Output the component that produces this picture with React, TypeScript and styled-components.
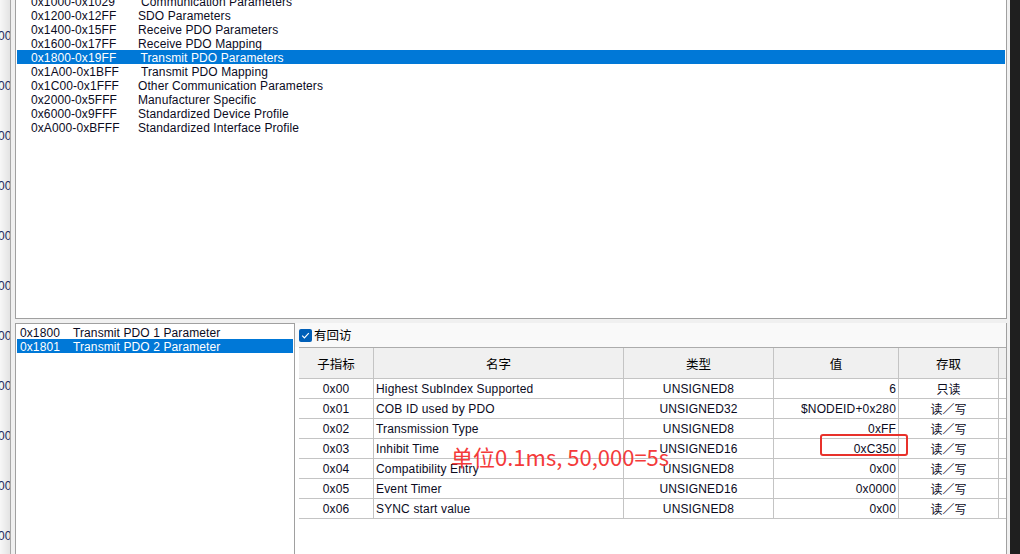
import React from "react";
import styled, { createGlobalStyle } from "styled-components";

const UI_FONT = `"Liberation Sans", Arial, "Noto Sans CJK SC", sans-serif`;
const CJK_FONT = `"Noto Sans CJK SC", "Liberation Sans", sans-serif`;

const GlobalStyle = createGlobalStyle`
  html, body { margin: 0; padding: 0; background: #f0f0f0; overflow: hidden; }
  #root { width: 1020px; height: 554px; }
`;

const Screen = styled.div`
  position: relative;
  width: 1020px;
  height: 554px;
  display: flex;
  background: #f0f0f0;
  overflow: hidden;
  font-family: ${UI_FONT};
  font-size: 12px;
  letter-spacing: 0.1px;
  color: #0b0b1e;
`;

const RulerStrip = styled.div`
  width: 10px;
  flex: none;
  border-right: 1px solid #a8a8a8;
  background: linear-gradient(to right, #f7f7f7, #e3e3e3);
  overflow: hidden;
  padding-top: 29px;
  display: flex;
  flex-direction: column;
`;

const RulerLabel = styled.div`
  height: 50px;
  flex: none;
  line-height: 14px;
  margin-left: -2px;
  color: #1c2a5e;
  white-space: nowrap;
`;

const Gutter = styled.div`
  width: 4px;
  flex: none;
`;

const MainColumn = styled.div`
  width: 992px;
  flex: none;
  display: flex;
  flex-direction: column;
`;

const TopPanel = styled.div`
  height: 319px;
  flex: none;
  box-sizing: border-box;
  border: 1px solid #a0a0a0;
  border-top: none;
  background: #fff;
  overflow: hidden;
`;

const IndexList = styled.div`
  margin-top: -6px;
  padding: 0 1px;
  display: flex;
  flex-direction: column;
`;

const IndexRow = styled.div<{ $selected?: boolean }>`
  height: 14px;
  line-height: 16px;
  display: flex;
  padding-left: 14px;
  white-space: nowrap;
  background: ${(p) => (p.$selected ? "#0078d7" : "transparent")};
  color: ${(p) => (p.$selected ? "#fff" : "#0b0b1e")};
`;

const RangeText = styled.span<{ $shift: number }>`
  width: ${(p) => 107 + p.$shift}px;
  flex: none;
`;

const Splitter = styled.div`
  height: 4px;
  flex: none;
`;

const BottomRow = styled.div`
  flex: 1;
  display: flex;
  min-height: 0;
`;

const SubList = styled.div`
  width: 280px;
  flex: none;
  box-sizing: border-box;
  border: 1px solid #a0a0a0;
  border-bottom: none;
  background: #fff;
  padding: 1px;
  display: flex;
  flex-direction: column;
`;

const SubRow = styled.div<{ $selected?: boolean }>`
  height: 14px;
  line-height: 16px;
  display: flex;
  padding-left: 3px;
  white-space: nowrap;
  background: ${(p) => (p.$selected ? "#0078d7" : "transparent")};
  color: ${(p) => (p.$selected ? "#fff" : "#0b0b1e")};
`;

const SubIndex = styled.span`
  width: 53px;
  flex: none;
`;

const RightPane = styled.div`
  flex: 1;
  display: flex;
  flex-direction: column;
  border-right: 1px solid #a0a0a0;
  background: #f9f9f9;
  min-width: 0;
`;

const OptionBar = styled.div`
  height: 24px;
  flex: none;
  display: flex;
  align-items: center;
  padding-left: 4px;
  gap: 2px;
`;

const CheckBox = styled.span`
  width: 13px;
  height: 13px;
  border-radius: 2px;
  background: #005fb8;
  display: inline-flex;
  align-items: center;
  justify-content: center;
`;

const OptionLabel = styled.span`
  font-family: ${CJK_FONT};
  font-size: 12.5px;
  letter-spacing: 0;
  color: #000;
  line-height: 16px;
`;

const TableArea = styled.div`
  flex: 1;
  background: #fff;
  padding-left: 4px;
`;

const Grid = styled.div`
  display: grid;
  grid-template-columns: 75px 250px 150px 125px 100px 1fr;
  border-top: 1px solid #acacac;
`;

const HeaderCell = styled.div<{ $last?: boolean }>`
  height: 31px;
  box-sizing: border-box;
  background: #f0f0f0;
  border-bottom: 1px solid #c4c4c4;
  border-right: ${(p) => (p.$last ? "none" : "1px solid #c4c4c4")};
  display: flex;
  align-items: center;
  justify-content: center;
  font-family: ${CJK_FONT};
  font-size: 12.5px;
  letter-spacing: 0;
  color: #000;
`;

const Cell = styled.div<{ $align?: "left" | "center" | "right"; $cjk?: boolean; $last?: boolean }>`
  height: 20px;
  box-sizing: border-box;
  border-bottom: 1px solid #c4c4c4;
  border-right: ${(p) => (p.$last ? "none" : "1px solid #c4c4c4")};
  display: flex;
  align-items: center;
  justify-content: ${(p) =>
    p.$align === "left" ? "flex-start" : p.$align === "right" ? "flex-end" : "center"};
  padding: 0 2px;
  white-space: nowrap;
  overflow: hidden;
  font-family: ${(p) => (p.$cjk ? CJK_FONT : UI_FONT)};
  font-size: 12px;
  letter-spacing: ${(p) => (p.$cjk ? "0" : "0.15px")};
  color: #0b0b1e;
`;

const EdgeLight = styled.div`
  width: 3px;
  flex: none;
  background: #f0f0f0;
`;

const EdgeDark = styled.div`
  width: 10px;
  flex: none;
  background: #1f1f1f;
`;

const Annotation = styled.div`
  position: absolute;
  left: 451px;
  top: 445px;
  font-family: ${CJK_FONT};
  font-size: 22px;
  line-height: 22px;
  letter-spacing: 0;
  color: #f43a3a;
  white-space: nowrap;
`;

const MarkBox = styled.div`
  position: absolute;
  left: 820px;
  top: 434px;
  width: 88px;
  height: 22px;
  box-sizing: border-box;
  border: 2px solid #e8312b;
  border-radius: 3px;
`;

const indexRanges: { range: string; name: string; shift: number; selected?: boolean }[] = [
  { range: "0x1000-0x1029", name: "Communication Parameters", shift: 3 },
  { range: "0x1200-0x12FF", name: "SDO Parameters", shift: 0 },
  { range: "0x1400-0x15FF", name: "Receive PDO Parameters", shift: 0 },
  { range: "0x1600-0x17FF", name: "Receive PDO Mapping", shift: 0 },
  { range: "0x1800-0x19FF", name: "Transmit PDO Parameters", shift: 2.5, selected: true },
  { range: "0x1A00-0x1BFF", name: "Transmit PDO Mapping", shift: 3 },
  { range: "0x1C00-0x1FFF", name: "Other Communication Parameters", shift: 0 },
  { range: "0x2000-0x5FFF", name: "Manufacturer Specific", shift: 0 },
  { range: "0x6000-0x9FFF", name: "Standardized Device Profile", shift: 0 },
  { range: "0xA000-0xBFFF", name: "Standardized Interface Profile", shift: 0 },
];

const subObjects = [
  { index: "0x1800", name: "Transmit PDO 1 Parameter" },
  { index: "0x1801", name: "Transmit PDO 2 Parameter", selected: true },
];

const headers = ["子指标", "名字", "类型", "值", "存取"];

const entries = [
  ["0x00", "Highest SubIndex Supported", "UNSIGNED8", "6", "只读"],
  ["0x01", "COB ID used by PDO", "UNSIGNED32", "$NODEID+0x280", "读／写"],
  ["0x02", "Transmission Type", "UNSIGNED8", "0xFF", "读／写"],
  ["0x03", "Inhibit Time", "UNSIGNED16", "0xC350", "读／写"],
  ["0x04", "Compatibility Entry", "UNSIGNED8", "0x00", "读／写"],
  ["0x05", "Event Timer", "UNSIGNED16", "0x0000", "读／写"],
  ["0x06", "SYNC start value", "UNSIGNED8", "0x00", "读／写"],
];

export default function App() {
  return (
    <>
      <GlobalStyle />
      <Screen>
        <RulerStrip>
          {Array.from({ length: 11 }).map((_, i) => (
            <RulerLabel key={i}>000</RulerLabel>
          ))}
        </RulerStrip>
        <Gutter />
        <MainColumn>
          <TopPanel>
            <IndexList>
              {indexRanges.map((r) => (
                <IndexRow key={r.range} $selected={r.selected}>
                  <RangeText $shift={r.shift}>{r.range}</RangeText>
                  <span>{r.name}</span>
                </IndexRow>
              ))}
            </IndexList>
          </TopPanel>
          <Splitter />
          <BottomRow>
            <SubList>
              {subObjects.map((s) => (
                <SubRow key={s.index} $selected={s.selected}>
                  <SubIndex>{s.index}</SubIndex>
                  <span>{s.name}</span>
                </SubRow>
              ))}
            </SubList>
            <RightPane>
              <OptionBar>
                <CheckBox>
                  <svg width="11" height="11" viewBox="0 0 11 11">
                    <path d="M2.2 5.6 L4.4 7.8 L8.8 3.2" fill="none" stroke="#fff" strokeWidth="1.2" />
                  </svg>
                </CheckBox>
                <OptionLabel>有回访</OptionLabel>
              </OptionBar>
              <TableArea>
                <Grid>
                  {headers.map((h) => (
                    <HeaderCell key={h}>{h}</HeaderCell>
                  ))}
                  <HeaderCell $last />
                  {entries.map((row) => (
                    <React.Fragment key={row[0]}>
                      <Cell $align="center">{row[0]}</Cell>
                      <Cell $align="left">{row[1]}</Cell>
                      <Cell $align="center">{row[2]}</Cell>
                      <Cell $align="right">{row[3]}</Cell>
                      <Cell $align="center" $cjk>{row[4]}</Cell>
                      <Cell $last />
                    </React.Fragment>
                  ))}
                </Grid>
              </TableArea>
            </RightPane>
          </BottomRow>
        </MainColumn>
        <EdgeLight />
        <EdgeDark />
        <Annotation>单位0.1ms, 50,000=5s</Annotation>
        <MarkBox />
      </Screen>
    </>
  );
}
